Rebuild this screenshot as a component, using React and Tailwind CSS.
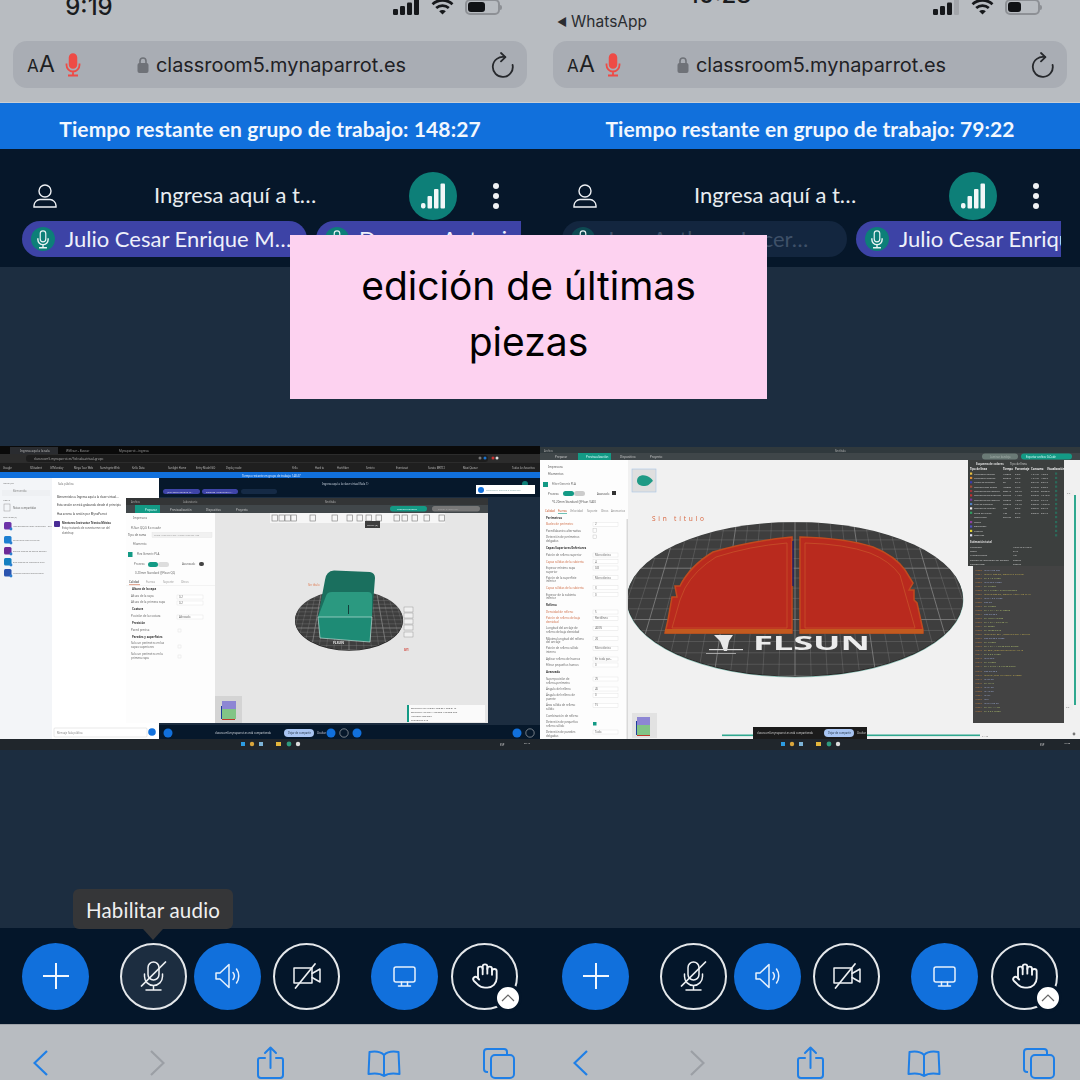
import React from "react";
import { Hand } from "lucide-react";

const T = ({ x, y, s = 3, c = "#555", b, a, children }) => (
  <text x={x} y={y} fontSize={s} fill={c} fontWeight={b ? 700 : 400} textAnchor={a}>{children}</text>
);

const Bed = ({ cx, cy, rx, ry, id, step }) => {
  const lines = [];
  for (let i = -14; i <= 14; i++) {
    const top = cx + i * step * 0.78;
    const bot = cx + i * step * 1.08;
    lines.push(<line key={"v" + i} x1={top} y1={cy - ry} x2={bot} y2={cy + ry} stroke="#8f8f8f" strokeWidth={i % 5 === 0 ? 0.7 : 0.3} />);
  }
  for (let j = 0; j < 16; j++) {
    const t = j / 15;
    const y = cy - ry + 2 * ry * (t * 0.85 + t * t * 0.15);
    lines.push(<line key={"h" + j} x1={cx - rx} y1={y} x2={cx + rx} y2={y} stroke="#8f8f8f" strokeWidth={j % 5 === 0 ? 0.7 : 0.3} />);
  }
  return (
    <g>
      <clipPath id={id}><ellipse cx={cx} cy={cy} rx={rx} ry={ry} /></clipPath>
      <ellipse cx={cx} cy={cy + 0.8} rx={rx} ry={ry} fill="#222" />
      <ellipse cx={cx} cy={cy} rx={rx} ry={ry} fill="#3e3e3e" />
      <g clipPath={`url(#${id})`}>{lines}</g>
    </g>
  );
};

const Box = ({ x, y, w, t, c = "#666" }) => (
  <g>
    <rect x={x} y={y - 3} width={w} height={4} fill="#fff" stroke="#d5d5d5" strokeWidth={0.3} />
    {t && <T x={x + 2} y={y} s={2.8} c={c}>{t}</T>}
  </g>
);

function LeftShot() {
  const chats = [
    [522, "#6d33a8", "Iván Sebastián Pérez Valenzuela - Gru"],
    [536, "#1d7fd1", "Grupo aquí está la sala de"],
    [547, "#6d2a98", "Equipo técnico de apoyo Canada"],
    [558, "#137fc0", "Sala técnica de Ingeniería para"],
    [569, "#2a54b0", "Profesor técnico Mónica Gallo"],
  ];
  const pRows = [
    [519, "Impresora", 133, 0],
    [529, "FLSun QQ-S E.x nozzle", 131, 0],
    [545, "Filamento", 133, 0],
    [555, "Flex Generic PLA", 137, 0],
    [565, "Proceso", 134, 0],
    [565, "Avanzado", 182, 0],
    [574, "0.20mm Standard @Flsun QQ", 135, 0],
    [590, "Altura de la capa", 132, 1],
    [597, "Altura de la capa", 131, 0],
    [603, "Altura de la primera capa", 131, 0],
    [610, "Costura", 132, 1],
    [617, "Posición de la costura", 131, 0],
    [624, "Precisión", 132, 1],
    [631, "Pared precisa", 131, 0],
    [638, "Paredes y superficies", 132, 1],
    [644, "Solo un perímetro en las", 131, 0],
    [648, "capas superiores", 131, 0],
    [655, "Solo un perímetro en la", 131, 0],
    [659, "primera capa", 131, 0],
  ];
  return (
    <svg className="block w-[540px] h-[304px] blur-[0.6px]" viewBox="0 446 540 304">
      <rect x="0" y="446" width="540" height="304" fill="#1c2d40" />
      <rect x="0" y="446" width="540" height="8" fill="#0a0a0a" />
      <rect x="10" y="447" width="48" height="7" fill="#2a2c30" />
      <T x={20} y={452} s={3} c="#bbb">Ingresa aquí a la sala</T>
      <T x={66} y={452} s={3} c="#999">Wifilsun - Buscar</T>
      <T x={119} y={452} s={3} c="#999">Mynaparrot - ingresa</T>
      <rect x="0" y="454" width="540" height="9" fill="#2c2c2c" />
      <rect x="26" y="455" width="462" height="7" rx="3" fill="#1d1d1d" />
      <T x={34} y={460} s={3} c="#aaa">classroom5.mynaparrot.es/?id=sala-virtual-grupo</T>
      <circle cx="480" cy="458" r="1.5" fill="#777" /><circle cx="497" cy="458" r="1.5" fill="#ddd" />
      <circle cx="485" cy="458" r="1.5" fill="#1b75d0" /><circle cx="493" cy="458" r="1.5" fill="#c33" />
      <rect x="0" y="463" width="540" height="9" fill="#1f1f1f" />
      {[["Google",3],["SIStudent",30],["GTMonday",50],["Mega Tour Web",74],["Sumérgete Web",100],["Kello Data",132],["Sunlight Home",168],["Entry Model GO",196],["Deploy node",226],["Yello",292],["Hard to",315],["Hortifiber",337],["Sentrix",366],["Eventosat",396],["Sorato MRTCI",428],["Maxi Queue",463],["Todos los favoritos",512]].map(([l, x]) => (
        <T key={l} x={x} y={469} s={2.6} c="#bbb">{l}</T>
      ))}
      <rect x="0" y="472" width="540" height="6" fill="#1170dc" />
      <T x={242} y={476.5} s={2.8} c="#dfeaff">Tiempo restante en grupo de trabajo: 148:27</T>

      <rect x="0" y="478" width="159" height="261" fill="#fff" />
      <rect x="0" y="478" width="52" height="261" fill="#f3f5f8" />
      <T x={3} y={484} s={2.2} c="#777">MENSAJES</T>
      <rect x="2" y="490" width="48" height="6" fill="#eef0f3" />
      <T x={13} y={492} s={2.6} c="#888">Bienvenida</T>
      <T x={3} y={501} s={2.2} c="#777">NOTAS</T>
      <rect x="4" y="504" width="6" height="7" fill="none" stroke="#999" strokeWidth="0.5" />
      <T x={13} y={509} s={2.6} c="#666">Notas compartidas</T>
      <T x={3} y={518} s={2.2} c="#777">USUARIOS (9)</T>
      {chats.map(([y, c, l]) => (
        <g key={y}>
          <rect x="4" y={y} width="7.5" height="7.5" rx="1.5" fill={c} />
          <circle cx="11" cy={y + 7} r="1.4" fill="#2a7fd0" />
          <T x={13} y={y + 4.5} s={2.2} c="#777">{l}</T>
        </g>
      ))}
      <T x={58} y={485} s={2.8} c="#777">Sala pública</T>
      <T x={57} y={498} s={2.9} c="#333">Bienvenidos a Ingresa aquí a la clase virtual...</T>
      <T x={57} y={506} s={2.9} c="#333">Esta sesión se está grabando desde el principio</T>
      <T x={57} y={515} s={2.9} c="#333">Haz acceso la sesión por MynaParrot</T>
      <rect x="54" y="521" width="6" height="6" rx="1" fill="#4a2d96" />
      <T x={62} y={524} s={2.7} c="#333" b>Mentores: Instructor Técnico México</T>
      <T x={62} y={529} s={2.7} c="#555">Estoy tratando de conectarme con del</T>
      <T x={62} y={534} s={2.7} c="#555">sketchup</T>
      <rect x="54" y="728" width="93" height="9" rx="1" fill="#fff" stroke="#c8c8c8" strokeWidth="0.4" />
      <T x={57} y={734} s={2.6} c="#888">Mensaje Sala pública</T>
      <circle cx="152" cy="732" r="3.8" fill="#1170dc" />

      <rect x="159" y="478" width="381" height="19" fill="#06182b" />
      <rect x="163" y="489" width="37" height="5" rx="2.5" fill="#3e44a8" />
      <rect x="202" y="489" width="36" height="5" rx="2.5" fill="#3e44a8" />
      <rect x="241" y="489" width="36" height="5" rx="2.5" fill="#152a45" />
      <T x={167} y={492.8} s={2.4} c="#dde">Julio Cesar Enrique M…</T>
      <T x={206} y={492.8} s={2.4} c="#dde">Damaso Antonio Ortiz…</T>
      <T x={322} y={485} s={2.7} c="#c9d3df">Ingresa aquí a la clase virtual (Sala 1)</T>
      <circle cx="525" cy="484" r="3" fill="#0d7f78" />
      <rect x="476" y="485" width="59" height="9" fill="#fff" />
      <circle cx="481" cy="490" r="3" fill="#1170dc" />
      <T x={486} y={491} s={2.5} c="#8aa">Compartir archivo o conexión</T>

      <rect x="126" y="498" width="362" height="7" fill="#333536" />
      <T x={131} y={503} s={2.6} c="#aaa">Archivo</T>
      <T x={183} y={503} s={2.6} c="#aaa">Laboratorio</T>
      <T x={325} y={503} s={2.6} c="#bbb">Sin título</T>
      <rect x="126" y="505" width="362" height="8" fill="#41474a" />
      <rect x="135" y="505" width="25" height="8" fill="#139a85" />
      <T x={145} y={510.5} s={2.9} c="#dff">Preparar</T>
      <T x={170} y={510.5} s={2.9} c="#ccc">Previsualización</T>
      <T x={206} y={510.5} s={2.9} c="#ccc">Dispositivo</T>
      <T x={236} y={510.5} s={2.9} c="#ccc">Proyecto</T>
      <rect x="390" y="506" width="37" height="5.5" rx="2.7" fill="#139a85" />
      <T x={397} y={510} s={2.5} c="#dff">Laminar bandeja</T>
      <rect x="432" y="506" width="48" height="5.5" rx="2.7" fill="#777" />
      <T x={438} y={510} s={2.5} c="#aaa">Enviar e imprimir</T>

      <rect x="126" y="513" width="89" height="210" fill="#fdfdfd" />
      <rect x="215" y="513" width="273" height="210" fill="#e6e6e6" />
      {pRows.map(([y, l, x, b], i) => <T key={i} x={x} y={y} s={2.9} c={b ? "#333" : "#666"} b={b}>{l}</T>)}
      <T x={128} y={536} s={2.9} c="#555">Tipo de cama</T>
      <rect x="152" y="532.5" width="60" height="5" fill="#f1f1f1" stroke="#ddd" strokeWidth="0.3" />
      <T x={154} y={536} s={2.5} c="#999">Placa Alisa PEI Lisa / Placa Alisa de Alta</T>
      <rect x="128" y="552" width="4.5" height="5" fill="#139a85" />
      <rect x="148" y="562" width="10" height="5" rx="2.5" fill="#139a85" />
      <rect x="158" y="562" width="11" height="5" rx="2.5" fill="#ddd" />
      <rect x="199" y="562" width="5" height="4" rx="2" fill="#444" />
      {[["Calidad", 129, "#333"], ["Fuerza", 146, "#999"], ["Soporte", 163, "#999"], ["Otros", 181, "#999"]].map(([l, x, c]) => <T key={l} x={x} y={583} s={2.9} c={c}>{l}</T>)}
      <rect x="129" y="584.5" width="11" height="0.6" fill="#c8552a" />
      <rect x="126" y="585.3" width="89" height="0.3" fill="#ddd" />
      <Box x={177} y={598} w={26} t="0.2" />
      <Box x={177} y={604} w={26} t="0.2" />
      <Box x={177} y={618} w={26} t="Alineado" />
      <rect x="178" y="629" width="3" height="3" fill="none" stroke="#ddd" strokeWidth="0.4" />
      <rect x="178" y="645" width="3" height="3" fill="none" stroke="#ddd" strokeWidth="0.4" />
      <rect x="178" y="655" width="3" height="3" fill="none" stroke="#ddd" strokeWidth="0.4" />
      <rect x="215" y="696" width="27" height="27" fill="#d4d4d4" />
      <rect x="222" y="701" width="14" height="9" fill="#8d86d4" />
      <rect x="222" y="709" width="14" height="10" fill="#82c486" />
      <rect x="221" y="706" width="1" height="13" fill="#1d3e9b" />
      <rect x="222" y="719" width="13" height="1" fill="#c0392b" />
      <rect x="270" y="513" width="175" height="10" fill="#f6f6f6" />
      {[272, 279, 285, 291, 310, 332, 347, 357, 366, 376, 394, 402, 412, 424, 439].map((x) => <rect key={x} x={x} y="515" width="5.5" height="6" fill="none" stroke="#777" strokeWidth="0.6" />)}
      <rect x="365" y="521" width="15" height="7" fill="#3d3d3d" />
      <T x={367} y={526} s={2.5} c="#ddd">Cortar (S)</T>
      <T x={308} y={586} s={2.8} c="#e07a50">Sin título</T>
      <Bed cx={349} cy={620} rx={54} ry={30} id="bedL" step={7} />
      <path d="M325 580Q326 571 334 570.5L370 572Q375 573 375 578L372 617L318 617Z" fill="#1a6f5e" />
      <path d="M326 596Q327 592 332 592L368 592Q372 592 372 596L372 617L318 617Z" fill="#2b9980" />
      <polygon points="318,617 372,617 370,642 320,638" fill="#1e8b75" />
      <path d="M318 617L372 617M320 638L370 642M318 617L320 638M372 617L370 642" stroke="#d4ece6" strokeWidth="0.6" fill="none" />
      <rect x="348" y="605" width="1" height="9" fill="#123f3a" />
      <T x={333} y={644} s={3.4} c="#e8e8e8" b>FLSUN</T>
      {[608, 614, 620, 626, 633].map((y) => <rect key={y} x="404" y={y - 1} width="9" height="5" fill="#f0f0f0" stroke="#888" strokeWidth="0.4" />)}
      <T x={404} y={651} s={3} c="#d0352a" b>0/1</T>
      <rect x="407" y="705" width="78" height="17" fill="#fafafa" />
      <rect x="407" y="705" width="2" height="17" fill="#139a85" />
      <T x={411} y={709} s={2.4} c="#555">Boundary box region: 300.05 x 200.01 m</T>
      <T x={411} y={713} s={2.4} c="#555">Boundary: 99.995 x 100.005 x 50.000 mm</T>
      <T x={411} y={717} s={2.4} c="#555">Volumen: 500 cm3</T>
      <T x={411} y={721} s={2.4} c="#555">Triángulos: 812</T>

      <rect x="159" y="725" width="381" height="14" fill="#06182b" />
      <circle cx="168" cy="733" r="4.5" fill="#1170dc" />
      <T x={215} y={734} s={2.6} c="#d5dbe2">classroom5.mynaparrot.es está compartiendo</T>
      <rect x="284" y="729" width="30" height="8" rx="4" fill="#a9c5f2" />
      <T x={288} y={734} s={2.6} c="#234">Dejar de compartir</T>
      <T x={317} y={734} s={2.6} c="#ccd">Ocultar</T>
      <circle cx="331" cy="733" r="4.5" fill="#1170dc" />
      <circle cx="344" cy="733" r="4.2" fill="none" stroke="#ddd" strokeWidth="0.5" />
      <circle cx="357" cy="733" r="4.5" fill="#1170dc" />
      <circle cx="517" cy="733" r="4.5" fill="#1170dc" />
      <circle cx="530" cy="733" r="4.2" fill="none" stroke="#ddd" strokeWidth="0.5" />
      <rect x="0" y="739" width="540" height="11" fill="#20262c" />
      <rect x="241" y="742" width="4" height="4" fill="#2d9be0" />
      <circle cx="252" cy="744" r="2.2" fill="#dca63c" />
      <rect x="259" y="742" width="4" height="4" fill="#7db3d6" />
      <rect x="276" y="742" width="5" height="4" fill="#e4b63c" />
      <circle cx="289" cy="744" r="2.4" fill="#2f9a7e" />
      <circle cx="298" cy="744" r="2.2" fill="#ddd" />
      <T x={500} y={746} s={2.6} c="#ccc">ESP</T>
      <T x={524} y={744} s={2.4} c="#ccc">09:19</T>
    </svg>
  );
}

const redL = "M665 633L668 620L672 597L677 597L675 586L680 586Q690 566 713 552Q750 541 792 537L792 633Z";
const redLi = "M672 628L680 600L685 588Q695 570 716 557Q750 546 787 543L787 628Z";
const redR = "M800 537Q845 538 873 547Q895 556 905 570L913 583L909 590L914 590L914 600L917 603L923 630L923 633L800 633Z";
const redRi = "M805 543Q845 544 870 553Q890 561 900 575L915 628L805 628Z";

function RightShot() {
  const rows = [
    [233, "Perímetros", "b"],
    [253, "Bucles de perímetro", "o", "2"],
    [272, "Pared/abanico alternativa", "", "", "c"],
    [291, "Detección de perímetros", "", "", "c"],
    [302, "delgados", ""],
    [324, "Capas Superiores/Inferiores", "b"],
    [345, "Patrón de relleno superior", "", "Monotónico"],
    [365, "Capas sólidas de la cubierta", "o", "4"],
    [384, "Espesor mínimo capa", "", "0.8"],
    [395, "superior", ""],
    [413, "Patrón de la superficie", "", "Monotónico"],
    [424, "inferior", ""],
    [443, "Capas sólidas de la cubierta", "o", "3"],
    [464, "Espesor de la cubierta", "", "0"],
    [475, "inferior", ""],
    [496, "Relleno", "b"],
    [516, "Densidad de relleno", "o", "5"],
    [535, "Patrón de relleno de baja", "o", "Rectilíneo"],
    [546, "densidad", "o"],
    [565, "Longitud del anclaje de", "", "400%"],
    [576, "relleno de baja densidad", ""],
    [596, "Máxima longitud del relleno", "", "20"],
    [607, "del anclaje", ""],
    [625, "Patrón de relleno sólido", "", "Monotónico"],
    [636, "interno", ""],
    [657, "Aplicar relleno de huecos", "", "En toda par…"],
    [675, "Filtrar pequeños huecos", "", "0"],
    [697, "Avanzado", "b"],
    [717, "Superposición de", "", "25"],
    [728, "relleno-perímetro", ""],
    [747, "Ángulo del relleno", "", "45"],
    [766, "Ángulo del relleno de", "", "0"],
    [777, "puente", ""],
    [796, "Área sólida de relleno", "", "15"],
    [807, "sólido", ""],
    [828, "Combinación de relleno", ""],
    [846, "Detección de pequeños", "", "", "t"],
    [857, "relleno sólido", ""],
    [876, "Detección de paredes", "", "Todo"],
    [887, "delgadas", ""],
  ];
  const stats = [
    ["Perímetro interior", "1m25s", "5.3%", "1.21 m", "4.09 g", "#e8c040"],
    ["Perímetro exterior", "3m27s", "9.5%", "1.61 m", "4.85 g", "#e08a30"],
    ["Pared de voladizo", "3s", "0.1%", "0.01 m", "0.04 g", "#3a3ab0"],
    ["Relleno poco denso", "4m28s", "7.9%", "2.18 m", "6.58 g", "#a04a3a"],
    ["Relleno sólido interno", "28m1s", "50.4%", "3.43 m", "25.03 g", "#a03038"],
    ["Relleno sólido superior", "5m42s", "11.0%", "0.73 m", "12.10 g", "#c03030"],
    ["Relleno sólido inferior", "7m27s", "13.8%", "0.40 m", "7.71 g", "#7a3a98"],
    ["Pico de voladizo", "7m27s", "12.1%", "6.82 m", "12.09 g", "#5080c0"],
    ["Relleno de huecos", "18s", "0.5%", "0.06 m", "0.01 g", "#f0f0f0"],
    ["Torre de purga", "13s", "0.4%", "0.03 m", "0.01 g", "#30a060"],
    ["Recorridos", "2m13s", "3.3%", "", "", "#444"],
  ];
  const extra = [["Retiro", "#9040a0"], ["Desretraer", "#5050c0"], ["Limpiar", "#e0d030"], ["Costuras", "#e0e0f0"]];
  const gcode = ["M73 P100 R00", "M73 P1 G92 E0 ; move to Z=0.2 First", "G1 E-1.5 F1800", "M73 Z0.2 F9000", "G1 F12000", "G1 X-9.4509 Y-0.7845 E0.0059", "M73 P0 G92 E0 ; move to 1 Zlift 1.20 F7 12", "M73 X-0.2 F1800", "G92 E0", "G1 F12000", "G1 X-9.4 Y-0.4 E1.00560", "G92 E0 Z0.2", "G1 X0.84 F10.000", "G1 X-0.4 Y-0.37 Z0.16", "G1 Z5000", "G1 F2700 0.845", "M73 P0 G1 E0.1 ; move to 3 Zlift 1.20 First", "G92 E0 Z0.2 F9000", "G1 F12000", "G1 X-0.4 Y-1.35 Z0.3667 E0.000", "G1 E0.8 ; wipe and retract 0.1 F5.10", "G1 E-0.2 F1800", "M73 Z0.2", "G1 F12000", "G1 X-0.427 Y-0.475 Z0.37876", "G92 E0 Z0.8", "M73 P0 ; END_FILAMENT_G-CODE", "M106 S0", "G1 X0 Y0", "M104 S0", "M140 S0", "M107", "M84", "M73 P100 R0", "G1 X0 Y-1.1 E0", "G1 E-0.3 F3000"];
  return (
    <svg className="block w-[540px] h-[304px] blur-[0.6px]" viewBox="540 446 540 304">
      <rect x="540" y="446" width="540" height="304" fill="#1c2d40" />
      <rect x="540" y="447" width="540" height="6" fill="#30393d" />
      <T x={544} y={451.5} s={2.6} c="#aaa">Archivo</T>
      <T x={835} y={451.5} s={2.6} c="#bbb">Sin título</T>
      <rect x="540" y="453" width="540" height="7" fill="#3f4649" />
      <rect x="578" y="453" width="33" height="7" fill="#139a85" />
      <T x={555} y={457.8} s={3} c="#ccc">Preparar</T>
      <T x={586} y={457.8} s={3} c="#dff">Previsualización</T>
      <T x={620} y={457.8} s={3} c="#ccc">Dispositivo</T>
      <T x={650} y={457.8} s={3} c="#ccc">Proyecto</T>
      <rect x="982" y="453.5" width="36" height="6" rx="3" fill="#6a7a76" />
      <T x={990} y={457.8} s={2.6} c="#a5b0ac">Laminar bandeja</T>
      <rect x="1021" y="453.5" width="51" height="6" rx="3" fill="#139a85" />
      <T x={1026} y={457.8} s={2.6} c="#dff">Exportar archivo G-Code</T>

      <rect x="628" y="460" width="452" height="279" fill="#f1f1f1" />
      <rect x="540" y="460" width="88" height="279" fill="#fdfdfd" />
      <T x={548} y={468} s={3} c="#555">Impresora</T>
      <T x={548} y={475} s={3} c="#555">Filamentos</T>
      <rect x="543" y="482" width="5" height="5" fill="#139a85" />
      <T x={552} y={485} s={2.9} c="#666">Filter Generic PLA</T>
      <T x={548} y={494.5} s={2.9} c="#555">Proceso</T>
      <rect x="563" y="491" width="11" height="5" rx="2.5" fill="#139a85" />
      <rect x="574" y="491" width="11" height="5" rx="2.5" fill="#ccc" />
      <T x={597} y={494.5} s={2.7} c="#555">Avanzado</T>
      <rect x="612" y="491" width="4" height="4" fill="#333" />
      <T x={552} y={503} s={2.9} c="#555">*0.20mm Standard @Flsun V400</T>
      {[["Calidad", 545, "#c8552a"], ["Fuerza", 558, "#c8552a"], ["Velocidad", 570, "#888"], ["Soporte", 587, "#888"], ["Otros", 601, "#888"], ["Accesorios", 611, "#888"]].map(([l, x, c]) => <T key={l} x={x} y={511.5} s={2.8} c={c}>{l}</T>)}
      <rect x="558" y="513" width="9" height="0.6" fill="#139a85" />
      {rows.map(([z, l, k, v, m]) => {
        const y = 440 + z / 3 + 1;
        return (
          <g key={z}>
            <T x={546} y={y} s={2.9} c={k === "b" ? "#333" : k === "o" ? "#d0704a" : "#666"} b={k === "b"}>{l}</T>
            {v ? <Box x={593} y={y} w={25} t={v} /> : null}
            {m === "c" && <rect x="593" y={y - 3} width="3.5" height="3.5" fill="none" stroke="#bbb" strokeWidth="0.4" />}
            {m === "t" && <rect x="593" y={y - 1} width="3.5" height="3.5" fill="#139a85" />}
          </g>
        );
      })}
      <rect x="626.5" y="519" width="1.5" height="220" fill="#d9d9d9" />

      <rect x="632" y="469" width="24" height="23" fill="#dfdfdf" stroke="#a9c6e6" strokeWidth="0.6" />
      <path d="M637 481C637 476 642 474 647 476C650 477 652 479 653 481C650 483 649 486 645 486C640 486 637 484 637 481Z" fill="#1f9a85" />
      <text x="652" y="521" fontSize="6.5" fill="#d96a44" textLength="52" lengthAdjust="spacing">Sin título</text>

      <clipPath id="vpR"><rect x="628" y="460" width="452" height="279" /></clipPath>
      <g clipPath="url(#vpR)">
        <ellipse cx="795" cy="600" rx="168" ry="77" fill="none" stroke="#2f9a85" strokeWidth="0.5" />
        <Bed cx={795} cy={599} rx={168} ry={77} id="bedR" step={15} />
      </g>
      <path d={redL} fill="#b92a1e" stroke="#c24a1e" strokeWidth="1.5" />
      <path d={redLi} fill="none" stroke="#c8522a" strokeWidth="0.8" />
      <path d={redR} fill="#b92a1e" stroke="#c24a1e" strokeWidth="1.5" />
      <path d={redRi} fill="none" stroke="#c8522a" strokeWidth="0.8" />
      <rect x="665" y="629" width="127" height="4.5" fill="#c25a1f" />
      <rect x="800" y="629" width="123" height="4.5" fill="#c25a1f" />
      <line x1="793" y1="541" x2="793" y2="586" stroke="#1a1a6a" strokeWidth="1.3" />
      <polygon points="714,635 733,635 729,641 727,651 724,651 720,641" fill="#e8e8e8" />
      <rect x="709" y="649" width="34" height="1.2" fill="#ddd" />
      <rect x="706" y="653" width="30" height="0.8" fill="#bbb" />
      <text x="753" y="650" fontSize="19" fontWeight="700" fill="#ececec" textLength="117" lengthAdjust="spacingAndGlyphs">FLSUN</text>

      <rect x="968" y="460" width="96" height="106" fill="#3c3f3e" />
      <T x={976} y={465} s={2.8} c="#ddd" b>Esquema de colores</T>
      <T x={1010} y={465} s={2.8} c="#ccc">Tipo de línea</T>
      <T x={970} y={470} s={2.7} c="#eee" b>Tipo de línea</T>
      <T x={1003} y={470} s={2.7} c="#eee" b>Tiempo</T>
      <T x={1015} y={470} s={2.7} c="#eee" b>Porcentaje</T>
      <T x={1031} y={470} s={2.7} c="#eee" b>Consumo</T>
      <T x={1047} y={470} s={2.7} c="#eee" b>Visualización</T>
      {stats.map(([l, t, p, a, g, c], i) => {
        const y = 474.5 + i * 4.35;
        return (
          <g key={l}>
            <rect x="970" y={y - 2} width="2.2" height="2.2" fill={c} />
            <T x={974} y={y} s={2.5} c="#c9c9c9">{l}</T>
            <T x={1003} y={y} s={2.5} c="#c9c9c9">{t}</T>
            <T x={1015} y={y} s={2.5} c="#c9c9c9">{p}</T>
            <T x={1031} y={y} s={2.5} c="#c9c9c9">{a}</T>
            <T x={1041} y={y} s={2.5} c="#c9c9c9">{g}</T>
            <rect x="1055" y={y - 2} width="2.2" height="2.2" fill="#2b6a5a" />
          </g>
        );
      })}
      {extra.map(([l, c], i) => {
        const y = 523 + i * 4.4;
        return (
          <g key={l}>
            <rect x="970" y={y - 2} width="2.2" height="2.2" fill={c} />
            <T x={974} y={y} s={2.5} c="#c9c9c9">{l}</T>
            <rect x="1055" y={y - 2} width="2.2" height="2.2" fill="#2b6a5a" />
          </g>
        );
      })}
      <T x={970} y={543} s={2.7} c="#ddd" b>Estimación total</T>
      {[["Filamento", "10.57 m    31.50 g"], ["Costo", "0.49"], ["Número capas", "101"], ["Tiempo de impresión del modelo", "56m2s"], ["Tiempo total", "56m2s"]].map(([l, v], i) => (
        <g key={l}>
          <T x={970} y={548 + i * 4.2} s={2.5} c="#c9c9c9">{l}</T>
          <T x={1013} y={548 + i * 4.2} s={2.5} c="#c9c9c9">{v}</T>
        </g>
      ))}
      <rect x="973" y="566" width="91" height="157" fill="#434343" />
      {gcode.map((g, i) => {
        const y = 571 + i * 4.02;
        const c = g.includes(";") ? "#b9a54d" : g.startsWith("G1") ? "#a4b36a" : "#8f9dc0";
        return (
          <g key={i}>
            <T x={975} y={y} s={2.4} c="#b5793e">{10320 + i}</T>
            <T x={984} y={y} s={2.4} c={c}>{g}</T>
          </g>
        );
      })}
      <rect x="1074" y="495" width="2" height="210" fill="#2fa88f" />
      <rect x="1066" y="490" width="8" height="6" fill="#eee" />
      <T x={1067} y={494} s={2.3} c="#777">5.2</T>
      <rect x="1065" y="704" width="8" height="6" fill="#eee" />
      <T x={1066} y={708} s={2.3} c="#777">0.2</T>
      <rect x="722" y="734.5" width="258" height="1.6" fill="#2fa88f" />
      <T x={982} y={737} s={2.4} c="#888">2 / 70</T>
      <circle cx="1074" cy="734" r="1.4" fill="#777" />
      <rect x="632" y="713" width="25" height="25" fill="#e2e2e2" />
      <rect x="637" y="717" width="13" height="8" fill="#8d86d4" />
      <rect x="637" y="725" width="13" height="10" fill="#82c486" />
      <rect x="636" y="721" width="1" height="14" fill="#1d3e9b" />
      <rect x="637" y="735" width="13" height="1" fill="#c0392b" />
      <rect x="753" y="727" width="114" height="12" fill="#1b1b1b" />
      <T x={757} y={734} s={2.6} c="#d5d5d5">classroom5.mynaparrot.es está compartiendo</T>
      <rect x="824" y="729" width="30" height="8" rx="4" fill="#a9c5f2" />
      <T x={828} y={734} s={2.6} c="#234">Dejar de compartir</T>
      <T x={857} y={734} s={2.6} c="#ccc">Ocultar</T>
      <rect x="540" y="739" width="540" height="11" fill="#20262c" />
      <rect x="781" y="742" width="4" height="4" fill="#2d9be0" />
      <circle cx="792" cy="744" r="2.2" fill="#dca63c" />
      <rect x="799" y="742" width="4" height="4" fill="#7db3d6" />
      <rect x="816" y="742" width="5" height="4" fill="#e4b63c" />
      <circle cx="829" cy="744" r="2.4" fill="#2f9a7e" />
      <circle cx="838" cy="744" r="2.2" fill="#ddd" />
      <T x={1040} y={746} s={2.6} c="#ccc">ESP</T>
      <T x={1064} y={744} s={2.4} c="#ccc">10:28</T>
    </svg>
  );
}

const MicSmall = ({ className, stroke, fill }) => (
  <svg className={className} viewBox="0 0 16 24" fill="none">
    <rect x="4.5" y="1" width="7" height="14" rx="3.5" fill={fill} stroke={stroke} strokeWidth="1.5" />
    <path d="M1.5 10.5v1.5a6.5 6.5 0 0 0 13 0v-1.5M8 18.5v3M3 22.5h10" stroke={stroke} strokeWidth="1.8" />
  </svg>
);

const Signal = ({ last }) => (
  <svg className="w-[27px] h-[16px]" viewBox="0 0 27 16">
    <rect x="0" y="10" width="5" height="6" rx="1.2" fill="#16181b" />
    <rect x="7" y="7" width="5" height="9" rx="1.2" fill="#16181b" />
    <rect x="14" y="3.5" width="5" height="12.5" rx="1.2" fill="#16181b" />
    <rect x="21" y="0" width="5" height="16" rx="1.2" fill={last} />
  </svg>
);

const Wifi = () => (
  <svg className="w-[23px] h-[16px]" viewBox="0 0 23 16" fill="none" stroke="#16181b" strokeWidth="2.7">
    <path d="M1.5 5.2C7 0 16 0 21.5 5.2" />
    <path d="M5.2 9C8.7 5.8 14.3 5.8 17.8 9" />
    <path d="M11.5 15.5L8.2 12.2C10 10.7 13 10.7 14.8 12.2Z" fill="#16181b" stroke="none" />
  </svg>
);

const Battery = ({ fill }) => (
  <div className="flex items-center">
    <div className="w-[35px] h-[16px] rounded-[5px] border-2 border-[#8d9095] p-[1px] flex -mt-px">
      <div className={`${fill} h-full rounded-[3px] bg-[#101215]`} />
    </div>
    <div className="w-[2px] h-[5px] rounded-r bg-[#8d9095]" />
  </div>
);

const Reload = () => (
  <svg className="w-[24px] h-[26px]" viewBox="0 0 24 26" fill="none" stroke="#26282c" strokeWidth="1.8" strokeLinecap="round" strokeLinejoin="round">
    <path d="M14 5.2A10 10 0 1 0 21.6 13" />
    <path d="M10 1l4.4 4.2L10 9.4" />
  </svg>
);

const UrlBar = () => (
  <div className="mx-[13px] h-[47px] rounded-[14px] bg-[#a9adb4] flex items-center">
    <span className="ml-[14px] w-[12px] text-[17px] text-[#1d1f23] font-['Inter'] leading-none mt-[4px]">A</span>
    <span className="w-[17px] text-[23px] text-[#1d1f23] font-['Inter'] leading-none">A</span>
    <MicSmall className="ml-[9px] w-[16px] h-[24px]" stroke="#ee4b46" fill="#ee4b46" />
    <svg className="ml-[56px] w-[12px] h-[17px]" viewBox="0 0 12 17">
      <path d="M3 8V5a3 3 0 0 1 6 0v3" fill="none" stroke="#6f7278" strokeWidth="1.6" />
      <rect x="0.5" y="7" width="11" height="10" rx="2" fill="#6f7278" />
    </svg>
    <span className="ml-[7px] mt-[2px] text-[19.9px] leading-none text-[#1f2125] font-['Inter']">classroom5.mynaparrot.es</span>
    <div className="ml-auto mr-[12px] flex"><Reload /></div>
  </div>
);

const Chip = ({ name, dim, cut }) => (
  <div className={`h-[36px] flex items-center overflow-hidden ${cut ? "w-[205px] ml-[9px] rounded-l-[18px]" : "w-[285px] rounded-[18px]"} ${dim ? "bg-[#13263f]" : "bg-[#3d43a6]"}`}>
    <div className={`ml-[9px] w-[24px] h-[24px] shrink-0 rounded-full flex items-center justify-center ${dim ? "bg-[#0e4a52]" : "bg-[#0d7f78]"}`}>
      <MicSmall className="w-[14px] h-[19px]" stroke="#e9f4f4" fill="none" />
    </div>
    <span className={`ml-[10px] text-[22px] leading-none whitespace-nowrap font-['Lato'] ${dim ? "text-[#3e5068]" : "text-[#eef0fa]"}`}>{name}</span>
  </div>
);

const RoundBtn = ({ blue, dim, className = "", children }) => (
  <div className={`w-[67px] h-[67px] shrink-0 rounded-full flex items-center justify-center relative ${blue ? "bg-[#1170dc]" : "border-2 border-[#e4e7ea]"} ${dim ? "bg-[#1c2d40]" : ""} ${className}`}>
    {children}
  </div>
);

const MicOff = () => (
  <svg className="w-[27px] h-[31px]" viewBox="0 0 27 31" fill="none" stroke="#eef1f4" strokeWidth="1.5" strokeLinecap="round">
    <rect x="8" y="1" width="11" height="18" rx="5.5" />
    <path d="M4.5 13v2.5a9 9 0 0 0 18 0V13M13.5 24.5V28M6 29h15" />
    <path d="M1.5 25L25.5 1" strokeWidth="1.7" />
  </svg>
);
const Speaker = () => (
  <svg className="w-[26px] h-[26px]" viewBox="0 0 26 26" fill="none" stroke="#e8f1fc" strokeWidth="1.5" strokeLinejoin="round" strokeLinecap="round">
    <path d="M1 10h4L14 1.5v23L5 16H1Z" />
    <path d="M18 9.5c1.6 2 1.6 5 0 7M21.5 6c3 4 3 10 0 14" />
  </svg>
);
const CamOff = () => (
  <svg className="w-[28px] h-[26px]" viewBox="0 0 28 26" fill="none" stroke="#eef1f4" strokeWidth="1.5" strokeLinecap="round" strokeLinejoin="round">
    <rect x="1" y="5" width="18" height="15" />
    <path d="M19 10.5L27 6v13l-8-4.5" />
    <path d="M2.5 25L22 1" strokeWidth="1.7" />
  </svg>
);
const Monitor = () => (
  <svg className="w-[23px] h-[21px]" viewBox="0 0 23 21" fill="none" stroke="#e8f1fc" strokeWidth="1.5" strokeLinecap="round">
    <rect x="1" y="1" width="21" height="15" rx="2" />
    <path d="M8.5 16v3.5M14.5 16v3.5M5.5 20h12" />
  </svg>
);

function Phone({ time, timeClass, whatsapp, lastBar, batt, remaining, chips, shot, tip }) {
  return (
    <div className="w-[540px] h-[1080px] flex flex-col shrink-0 overflow-hidden">
      <div className="h-[103px] bg-[#b8bcc1] border-b border-[#c9ced4] shrink-0">
        <div className="h-[41px] overflow-hidden relative flex items-start">
          <div className={`w-[140px] text-center text-[24px] leading-[24px] font-medium font-['Inter'] text-[#1a1c20] ${timeClass}`}>{time}</div>
          {whatsapp && (
            <div className="absolute left-[17px] top-[14px] flex items-center gap-[4px] text-[15.5px] leading-[16px] text-[#2a2c30] font-['Inter']">
              <span className="text-[11px]">◀</span><span>WhatsApp</span>
            </div>
          )}
          <div className="ml-auto mr-[38px] flex items-center gap-[11px] -mt-px">
            <Signal last={lastBar} />
            <Wifi />
            <Battery fill={batt} />
          </div>
        </div>
        <UrlBar />
      </div>
      <div className="h-[46px] pt-[6px] bg-[#1170dc] shrink-0 flex items-center justify-center text-[21px] font-bold font-['Lato'] tracking-[0.1px] text-[#f2f7fe]">
        {remaining}
      </div>
      <div className="h-[118px] bg-[#06172a] shrink-0 flex flex-col">
        <div className="h-[48px] mt-[23px] mb-[1px] flex items-center shrink-0">
          <svg className="ml-[33px] w-[24px] h-[24px]" viewBox="0 0 24 24" fill="none" stroke="#eef1f4" strokeWidth="1.4">
            <circle cx="12" cy="7" r="6" />
            <path d="M1 23v-1.5c0-3 3-6 6-6h10c3 0 6 3 6 6V23Z" />
          </svg>
          <span className="ml-[97px] -mt-[3px] w-[255px] text-[22px] leading-none text-[#e8ecf0] font-['Lato']">Ingresa aquí a t…</span>
          <div className="w-[48px] h-[48px] rounded-full bg-[#0d7f78] flex items-center justify-center">
            <svg className="w-[24px] h-[26px]" viewBox="0 0 24 26" fill="#f2f7f7">
              <rect x="0" y="20" width="4.5" height="5.5" rx="2" />
              <rect x="6.5" y="13" width="4.5" height="12.5" rx="1" />
              <rect x="13" y="6" width="4.5" height="19.5" rx="1" />
              <rect x="19.5" y="0.5" width="4.5" height="25" rx="1" />
            </svg>
          </div>
          <div className="ml-[36px] flex flex-col gap-[4px]">
            <div className="w-[6px] h-[6px] rounded-full bg-[#eef1f4]" />
            <div className="w-[6px] h-[6px] rounded-full bg-[#eef1f4]" />
            <div className="w-[6px] h-[6px] rounded-full bg-[#eef1f4]" />
          </div>
        </div>
        <div className="flex pl-[22px]">{chips}</div>
      </div>
      <div className="flex-1 bg-[#1c2d40] pt-[179px] relative">
        {shot}
        {tip}
      </div>
      <div className="h-[96px] bg-[#04162a] shrink-0 flex items-center pl-[22px]">
        <RoundBtn blue>
          <svg className="w-[28px] h-[28px]" viewBox="0 0 28 28" stroke="#f3f7fd" strokeWidth="2"><path d="M14 1v26M1 14h26" /></svg>
        </RoundBtn>
        <RoundBtn dim={!!tip} className="ml-[31px]"><MicOff /></RoundBtn>
        <RoundBtn blue className="ml-[7px]"><Speaker /></RoundBtn>
        <RoundBtn className="ml-[12px]"><CamOff /></RoundBtn>
        <RoundBtn blue className="ml-[31px]"><Monitor /></RoundBtn>
        <RoundBtn className="ml-[13px]">
          <Hand className="w-[28px] h-[30px]" color="#f2f4f6" strokeWidth={1.6} />
          <div className="absolute -right-[6px] -bottom-[4px] w-[28px] h-[28px] rounded-full bg-white border-[3px] border-[#04162a] flex items-center justify-center">
            <svg className="w-[14px] h-[8px]" viewBox="0 0 14 8" fill="none" stroke="#666" strokeWidth="1.2"><path d="M1 7l6-6 6 6" /></svg>
          </div>
        </RoundBtn>
      </div>
      <div className="h-[56px] bg-[#b8bcc1] border-t border-[#9ea2a8] shrink-0 flex items-start relative">
        <svg className="ml-[33px] mt-[25px] w-[15px] h-[26px]" viewBox="0 0 15 26" fill="none" stroke="#1f7fe6" strokeWidth="2.2"><path d="M14 1L1.5 13 14 25" /></svg>
        <svg className="ml-[102px] mt-[25px] w-[15px] h-[26px]" viewBox="0 0 15 26" fill="none" stroke="#9b9fa5" strokeWidth="2.2"><path d="M1 1l12.5 12L1 25" /></svg>
        <svg className="ml-[92px] mt-[21px] w-[27px] h-[33px]" viewBox="0 0 27 33" fill="none" stroke="#1f7fe6" strokeWidth="2" strokeLinecap="round" strokeLinejoin="round">
          <path d="M8 12H3a2 2 0 0 0-2 2v15a3 3 0 0 0 3 3h19a3 3 0 0 0 3-3V14a2 2 0 0 0-2-2h-5" />
          <path d="M13.5 22V1.5M8 7l5.5-5.5L19 7" />
        </svg>
        <svg className="ml-[83px] mt-[25px] w-[34px] h-[27px]" viewBox="0 0 34 27" fill="none" stroke="#1f7fe6" strokeWidth="2" strokeLinejoin="round">
          <path d="M17 5C14 2 8 1 2.5 2L1.5 24C7 23 13 23 17 26C21 23 27 23 32.5 24L31.5 2C26 1 20 2 17 5Z" />
          <path d="M17 5V26" />
        </svg>
        <svg className="ml-[82px] mt-[23px] w-[32px] h-[31px]" viewBox="0 0 32 31" fill="none" stroke="#1f7fe6" strokeWidth="2">
          <path d="M5 24H4a3 3 0 0 1-3-3V4a3 3 0 0 1 3-3h17a3 3 0 0 1 3 3v2" />
          <rect x="8" y="7" width="23" height="23" rx="4" />
        </svg>
      </div>
    </div>
  );
}

const Tip = () => (
  <div className="absolute left-[73px] top-[622px] z-10">
    <div className="w-[160px] h-[40px] pt-[3px] rounded-[6px] bg-[#353638] flex items-center justify-center text-[20.5px] leading-none text-[#f0f0f0] tracking-[0.2px] font-['Lato']">Habilitar audio</div>
    <div className="mx-auto w-0 h-0 border-x-[10px] border-x-transparent border-t-[11px] border-t-[#353638]" />
  </div>
);

export default function App() {
  return (
    <div className="relative w-[1080px] h-[1080px] overflow-hidden flex font-['Noto_Sans',sans-serif]">
      <Phone time="9:19" timeClass="pl-[38px] -mt-[5px]" lastBar="#16181b" batt="w-[60%]" remaining="Tiempo restante en grupo de trabajo: 148:27"
        chips={<><Chip name="Julio Cesar Enrique M…" /><Chip name="Damaso Antonio" cut /></>}
        shot={<LeftShot />} tip={<Tip />} />
      <Phone time="10:28" timeClass="pl-[120px] -mt-[17px] w-[240px]" whatsapp lastBar="#a3a6ab" batt="w-[45%]" remaining="Tiempo restante en grupo de trabajo: 79:22"
        chips={<><Chip name="Jose Anthony Lacer…" dim /><Chip name="Julio Cesar Enrique M…" cut /></>}
        shot={<RightShot />} />
      <div className="absolute left-[290px] top-[235px] w-[477px] h-[164px] bg-[#fdd2f0] flex items-center justify-center z-20">
        <p className="w-[400px] -mt-[7px] text-center text-[39px] leading-[56px] text-black font-['Inter'] font-normal">edición de últimas piezas</p>
      </div>
    </div>
  );
}
